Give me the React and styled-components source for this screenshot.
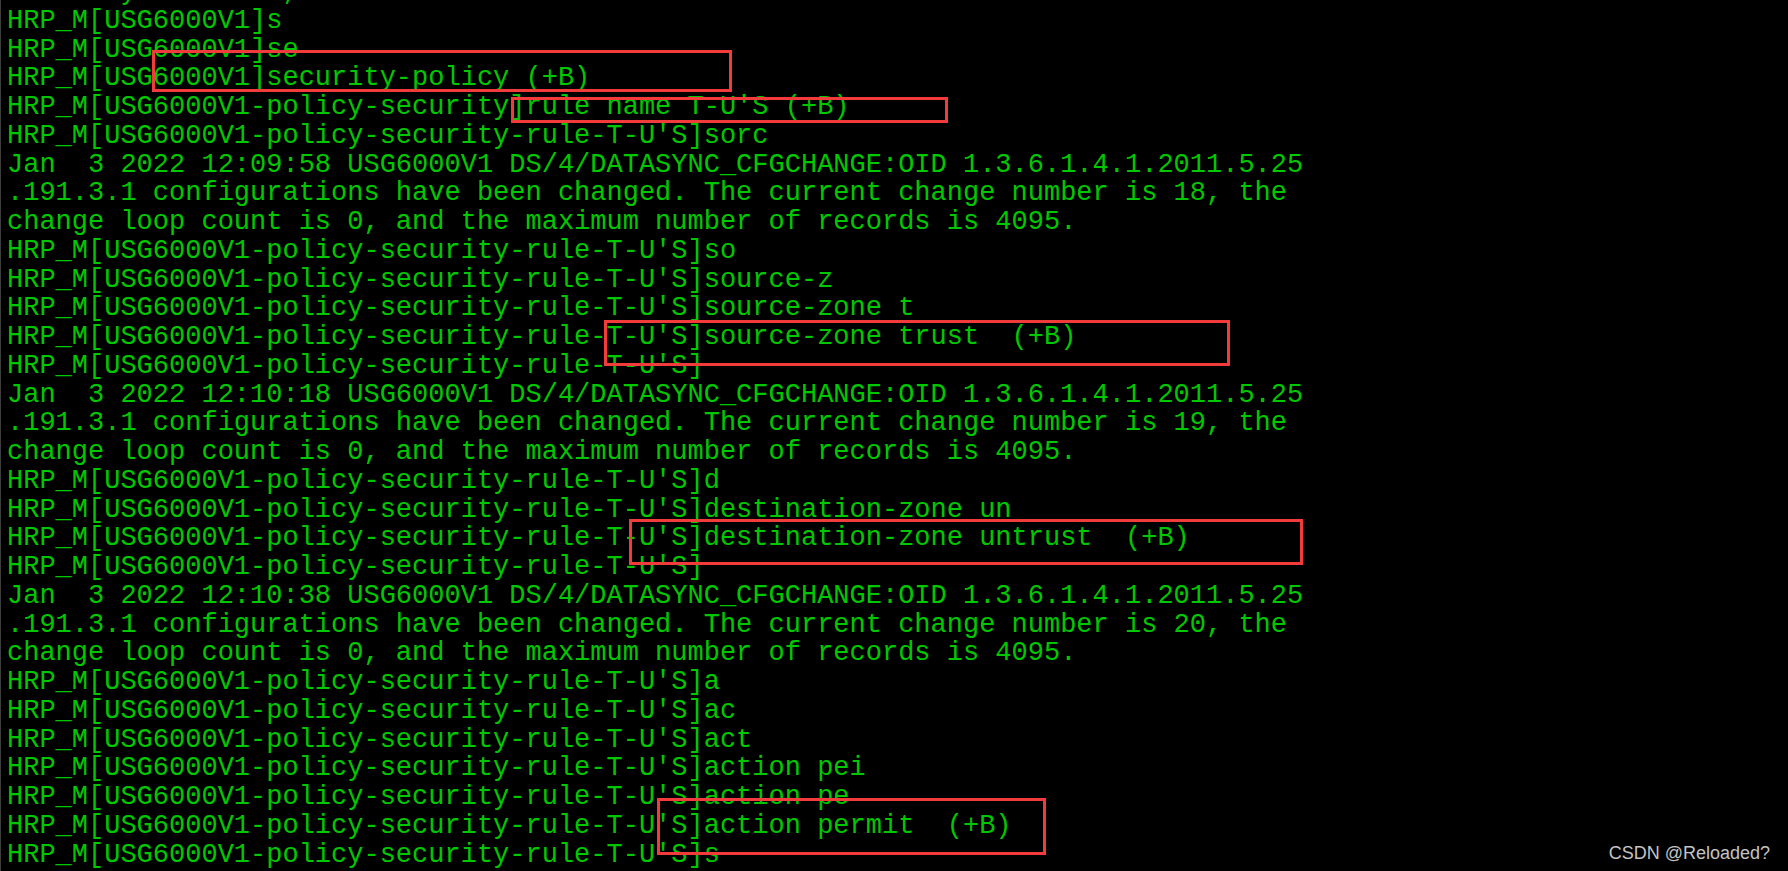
import React from 'react'
import styled, { createGlobalStyle } from 'styled-components'

const GlobalStyle = createGlobalStyle`
  html, body {
    margin: 0;
    padding: 0;
    background: #000;
    overflow: hidden;
  }
`

const Screen = styled.div`
  position: relative;
  height: 871px;
  overflow: hidden;
  background: #000;
  border-left: 1px solid #3c3c3c;
`

const Console = styled.div`
  margin-top: -22px;
  padding-left: 6px;
  font-family: "Liberation Mono", "Courier New", monospace;
  font-size: 27px;
  line-height: 28.75px;
  color: #00c800;
  white-space: pre;
`

const Line = styled.div`
  height: 28.75px;
`

// red annotation boxes drawn over the terminal output
const Marker = styled.div`
  position: absolute;
  left: ${(p) => p.$x}px;
  top: ${(p) => p.$y}px;
  width: ${(p) => p.$w}px;
  height: ${(p) => p.$h}px;
  box-sizing: border-box;
  border: 3px solid #f23b3b;
  pointer-events: none;
`

const Watermark = styled.span`
  position: absolute;
  right: 18px;
  bottom: 7px;
  font-family: "Liberation Sans", Arial, sans-serif;
  font-size: 18px;
  color: #c4c4c4;
`

const P1 = 'HRP_M[USG6000V1]'
const P2 = 'HRP_M[USG6000V1-policy-security]'
const P3 = "HRP_M[USG6000V1-policy-security-rule-T-U'S]"

const logLines = (time, num) => [
  `Jan  3 2022 ${time} USG6000V1 DS/4/DATASYNC_CFGCHANGE:OID 1.3.6.1.4.1.2011.5.25`,
  `.191.3.1 configurations have been changed. The current change number is ${num}, the`,
  'change loop count is 0, and the maximum number of records is 4095.',
]

const lines = [
  'Enter system view, return user view with Ctrl+Z.',
  P1 + 's',
  P1 + 'se',
  P1 + 'security-policy (+B)',
  P2 + "rule name T-U'S (+B)",
  P3 + 'sorc',
  ...logLines('12:09:58', 18),
  P3 + 'so',
  P3 + 'source-z',
  P3 + 'source-zone t',
  P3 + 'source-zone trust  (+B)',
  P3,
  ...logLines('12:10:18', 19),
  P3 + 'd',
  P3 + 'destination-zone un',
  P3 + 'destination-zone untrust  (+B)',
  P3,
  ...logLines('12:10:38', 20),
  P3 + 'a',
  P3 + 'ac',
  P3 + 'act',
  P3 + 'action pei',
  P3 + 'action pe',
  P3 + 'action permit  (+B)',
  P3 + 's',
]

const markers = [
  { x: 151, y: 50, w: 580, h: 42 },
  { x: 510, y: 97, w: 437, h: 26 },
  { x: 603, y: 320, w: 626, h: 46 },
  { x: 628, y: 519, w: 674, h: 46 },
  { x: 656, y: 798, w: 389, h: 57 },
]

const App = () => {
  return (
    <Screen>
      <GlobalStyle />
      <Console>
        {lines.map((text, i) => (
          <Line key={i}>{text}</Line>
        ))}
      </Console>
      {markers.map((m, i) => (
        <Marker key={i} $x={m.x} $y={m.y} $w={m.w} $h={m.h} />
      ))}
      <Watermark>CSDN @Reloaded?</Watermark>
    </Screen>
  )
}

export default App
